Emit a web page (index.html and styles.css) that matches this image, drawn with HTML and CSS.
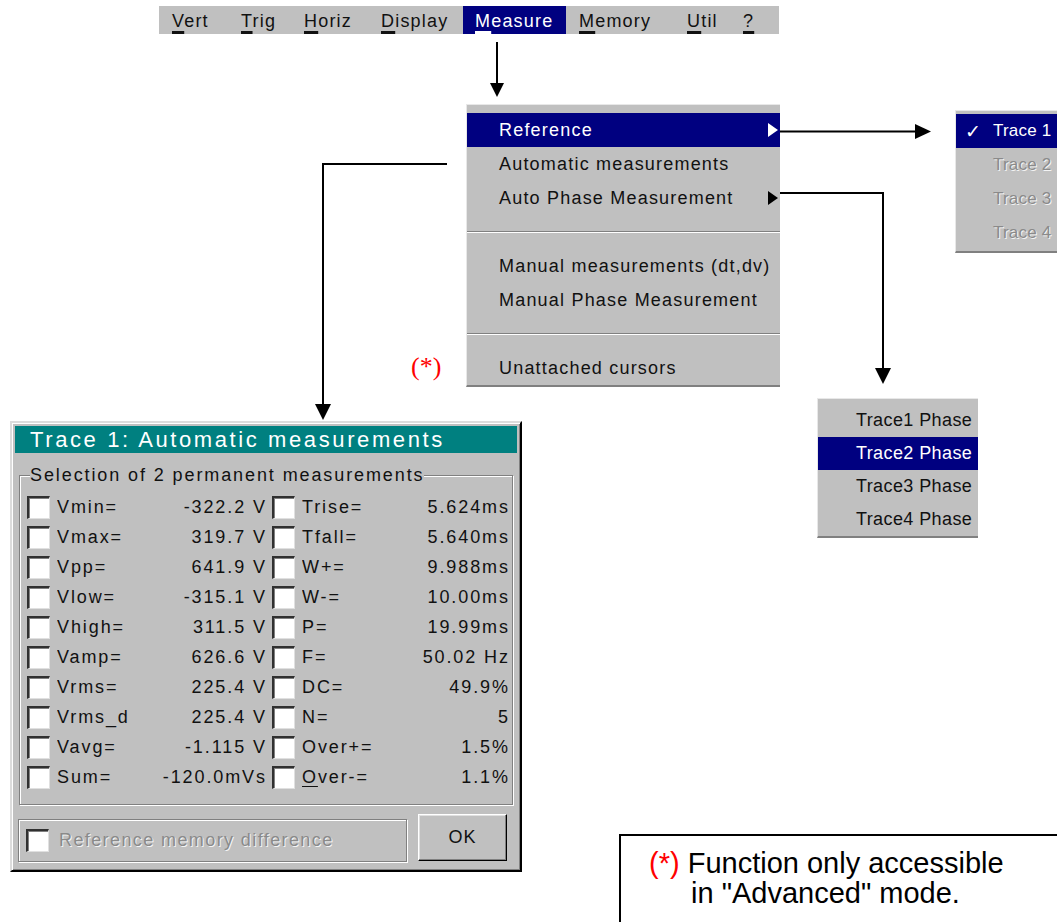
FILE: index.html
```html
<!DOCTYPE html>
<html>
<head>
    <title>Measure menu</title>
    <link rel="stylesheet" href="styles.css">
</head>
<body>
<div class="canvas">

    <div class="menubar">
        <span class="menubar-item"><u>V</u>ert</span>
        <span class="menubar-item"><u>T</u>rig</span>
        <span class="menubar-item"><u>H</u>oriz</span>
        <span class="menubar-item"><u>D</u>isplay</span>
        <span class="menubar-item active"><u>M</u>easure</span>
        <span class="menubar-item"><u>M</u>emory</span>
        <span class="menubar-item"><u>U</u>til</span>
        <span class="menubar-item"><u>?</u></span>
    </div>

    <div class="popup measure-menu">
        <div class="popup-item selected">Reference<span class="submenu-arrow"></span></div>
        <div class="popup-item">Automatic measurements</div>
        <div class="popup-item">Auto Phase Measurement<span class="submenu-arrow"></span></div>
        <div class="popup-sep"></div>
        <div class="popup-item">Manual measurements (dt,dv)</div>
        <div class="popup-item">Manual Phase Measurement</div>
        <div class="popup-sep"></div>
        <div class="popup-item">Unattached cursors</div>
    </div>

    <div class="popup trace-menu">
        <div class="popup-item selected"><span class="tick">✓</span>Trace 1</div>
        <div class="popup-item disabled"><span class="tick"></span>Trace 2</div>
        <div class="popup-item disabled"><span class="tick"></span>Trace 3</div>
        <div class="popup-item disabled"><span class="tick"></span>Trace 4</div>
    </div>

    <div class="popup phase-menu">
        <div class="popup-item">Trace1 Phase</div>
        <div class="popup-item selected">Trace2 Phase</div>
        <div class="popup-item">Trace3 Phase</div>
        <div class="popup-item">Trace4 Phase</div>
    </div>

    <span class="star-mark">(*)</span>

    <div class="dialog">
        <div class="dialog-title">Trace 1: Automatic measurements</div>
        <div class="group">
            <span class="group-title">Selection of 2 permanent measurements</span>
            <div class="measure-grid">
                <div class="measure"><span class="check"></span><span class="m-label">Vmin=</span><span class="m-value">-322.2 V</span></div>
                <div class="measure"><span class="check"></span><span class="m-label">Trise=</span><span class="m-value">5.624ms</span></div>
                <div class="measure"><span class="check"></span><span class="m-label">Vmax=</span><span class="m-value">319.7 V</span></div>
                <div class="measure"><span class="check"></span><span class="m-label">Tfall=</span><span class="m-value">5.640ms</span></div>
                <div class="measure"><span class="check"></span><span class="m-label">Vpp=</span><span class="m-value">641.9 V</span></div>
                <div class="measure"><span class="check"></span><span class="m-label">W+=</span><span class="m-value">9.988ms</span></div>
                <div class="measure"><span class="check"></span><span class="m-label">Vlow=</span><span class="m-value">-315.1 V</span></div>
                <div class="measure"><span class="check"></span><span class="m-label">W-=</span><span class="m-value">10.00ms</span></div>
                <div class="measure"><span class="check"></span><span class="m-label">Vhigh=</span><span class="m-value">311.5 V</span></div>
                <div class="measure"><span class="check"></span><span class="m-label">P=</span><span class="m-value">19.99ms</span></div>
                <div class="measure"><span class="check"></span><span class="m-label">Vamp=</span><span class="m-value">626.6 V</span></div>
                <div class="measure"><span class="check"></span><span class="m-label">F=</span><span class="m-value">50.02 Hz</span></div>
                <div class="measure"><span class="check"></span><span class="m-label">Vrms=</span><span class="m-value">225.4 V</span></div>
                <div class="measure"><span class="check"></span><span class="m-label">DC=</span><span class="m-value">49.9%</span></div>
                <div class="measure"><span class="check"></span><span class="m-label">Vrms_dc=</span><span class="m-value">225.4 V</span></div>
                <div class="measure"><span class="check"></span><span class="m-label">N=</span><span class="m-value">5</span></div>
                <div class="measure"><span class="check"></span><span class="m-label">Vavg=</span><span class="m-value">-1.115 V</span></div>
                <div class="measure"><span class="check"></span><span class="m-label">Over+=</span><span class="m-value">1.5%</span></div>
                <div class="measure"><span class="check"></span><span class="m-label">Sum=</span><span class="m-value">-120.0mVs</span></div>
                <div class="measure"><span class="check"></span><span class="m-label"><u>O</u>ver-=</span><span class="m-value">1.1%</span></div>
            </div>
        </div>
        <div class="dialog-bottom">
            <div class="ref-diff"><span class="check"></span><span class="disabled-text">Reference memory difference</span></div>
            <div class="ok-button">OK</div>
        </div>
    </div>

    <div class="note">
        <div><span class="note-star">(*)</span> Function only accessible</div>
        <div class="note-line2">in "Advanced" mode.</div>
    </div>

    <svg class="arrows" width="1057" height="922" viewBox="0 0 1057 922">
        <g fill="none" stroke="#000" stroke-width="2">
            <path d="M497 42 V86"/>
            <path d="M780 131.5 H917"/>
            <path d="M780 193 H883 V370"/>
            <path d="M447 164 H323 V406"/>
        </g>
        <g fill="#000">
            <polygon points="490,83 504,83 497,97"/>
            <polygon points="915,124 915,139 931,131.5"/>
            <polygon points="875,368 891,368 883,384"/>
            <polygon points="315,404 331,404 323,420"/>
        </g>
    </svg>

</div>
</body>
</html>
```

FILE: styles.css
```css
body {
    margin: 0;
    background: #fff;
    font-family: "Liberation Sans", Arial, sans-serif;
    color: #000;
    overflow: hidden;
}
.canvas {
    position: relative;
    width: 1057px;
    height: 922px;
    overflow: hidden;
}

/* menu bar */
.menubar {
    position: absolute;
    left: 159px;
    top: 6px;
    width: 620px;
    height: 28px;
    padding-left: 1px;
    box-sizing: border-box;
    background: #c0c0c0;
    display: grid;
    grid-template-columns: 69px 63px 77px 94px 104px 108px 56px auto;
    font-size: 18px;
    letter-spacing: 1.2px;
    color: #111;
}
.menubar-item {
    padding: 2px 0 0 12px;
    height: 28px;
    box-sizing: border-box;
    line-height: 26px;
    white-space: nowrap;
}
.menubar-item u {
    text-decoration-thickness: 3px;
    text-underline-offset: 4px;
}
.menubar-item.active {
    background: #000080;
    color: #fff;
    margin-right: 1px;
}

/* popup menus */
.popup {
    position: absolute;
    background: #c0c0c0;
    font-size: 18px;
    letter-spacing: 1.2px;
    color: #111;
    border-top: 1px solid #e8e8e8;
    border-left: 1px solid #e8e8e8;
    border-bottom: 2px solid #808080;
    box-sizing: border-box;
    white-space: nowrap;
    overflow: hidden;
}
.popup-item {
    display: flex;
    align-items: center;
    height: 34px;
}
.popup-item.selected {
    background: #000080;
    color: #fff;
}
.popup-item.disabled {
    color: #8a8a8a;
    text-shadow: 1px 1px 0 #f4f4f4;
}
.popup-sep {
    height: 34px;
    display: flex;
    flex-direction: column;
    justify-content: center;
}
.popup-sep::before {
    content: "";
    display: block;
    border-top: 1px solid #808080;
    border-bottom: 1px solid #fff;
}
.submenu-arrow {
    margin-left: auto;
    margin-right: 2px;
    width: 0;
    height: 0;
    border-left: 10px solid #000;
    border-top: 7px solid transparent;
    border-bottom: 7px solid transparent;
}
.selected .submenu-arrow {
    border-left-color: #fff;
}

.measure-menu {
    left: 466px;
    top: 104px;
    width: 314px;
    padding-top: 8px;
}
.measure-menu .popup-item {
    padding-left: 32px;
}

.trace-menu {
    left: 955px;
    top: 110px;
    width: 130px;
    padding-top: 3px;
    padding-bottom: 1px;
    font-size: 17px;
    letter-spacing: 0.2px;
}
.tick {
    font-family: "DejaVu Sans", sans-serif;
    width: 37px;
    padding-left: 9px;
    box-sizing: border-box;
    font-size: 19px;
}

.phase-menu {
    left: 817px;
    top: 398px;
    width: 161px;
    padding-top: 5px;
    padding-bottom: 0;
    letter-spacing: 0.4px;
}
.phase-menu .popup-item {
    height: 33px;
    padding-left: 38px;
}

.star-mark {
    position: absolute;
    left: 411px;
    top: 352px;
    font-family: "Liberation Serif", "Times New Roman", serif;
    font-size: 26px;
    line-height: 30px;
    color: #f00;
}

/* measurement dialog */
.dialog {
    position: absolute;
    left: 10px;
    top: 421px;
    width: 512px;
    box-sizing: border-box;
    background: #c0c0c0;
    border: 2px solid;
    border-color: #dcdcdc #000 #000 #dcdcdc;
    box-shadow: inset 1px 1px 0 #fff, inset -1px -1px 0 #808080;
    padding: 3px 3px 8px;
    font-size: 18px;
    letter-spacing: 1.9px;
    color: #111;
}
.dialog-title {
    height: 27px;
    line-height: 27px;
    background: #008080;
    color: #fff;
    font-size: 22px;
    letter-spacing: 2.6px;
    padding-left: 15px;
    white-space: nowrap;
}
.group {
    position: relative;
    margin: 22px 4px 0;
    padding: 16px 4px 12px 7px;
    border: 1px solid #808080;
    box-shadow: inset 1px 1px 0 #fff, 1px 1px 0 #fff;
}
.group-title {
    position: absolute;
    left: 10px;
    top: -11px;
    line-height: 20px;
    background: #c0c0c0;
    white-space: nowrap;
}
.measure-grid {
    display: grid;
    grid-template-columns: 238px 1fr;
    column-gap: 7px;
}
.measure {
    display: flex;
    align-items: center;
    height: 30px;
    white-space: nowrap;
}
.check {
    flex: none;
    width: 23px;
    height: 23px;
    box-sizing: border-box;
    background: #fff;
    border-top: 2px solid #303030;
    border-left: 2px solid #303030;
    border-right: 1px solid #e0e0e0;
    border-bottom: 1px solid #e0e0e0;
    box-shadow: inset 1px 1px 0 #808080;
}
.m-label {
    width: 71px;
    margin-left: 7px;
    overflow: hidden;
}
.m-value {
    margin-left: auto;
    margin-right: -1.9px;
}
.m-label u {
    text-underline-offset: 3px;
}

.dialog-bottom {
    display: flex;
    align-items: flex-start;
    margin-top: 9px;
}
.ref-diff {
    display: flex;
    align-items: center;
    width: 389px;
    height: 43px;
    margin: 5px 0 0 3px;
    padding-left: 7px;
    box-sizing: border-box;
    border: 1px solid #808080;
    box-shadow: inset 1px 1px 0 #fff, 1px 1px 0 #fff;
}
.disabled-text {
    margin-left: 10px;
    color: #8a8a8a;
    text-shadow: 1px 1px 0 #f4f4f4;
    letter-spacing: 1.4px;
}
.ok-button {
    width: 89px;
    height: 47px;
    margin-left: 11px;
    box-sizing: border-box;
    border: 1px solid;
    border-color: #fff #000 #000 #fff;
    box-shadow: inset -1px -1px 0 #808080, inset 1px 1px 0 #e0e0e0;
    display: flex;
    align-items: center;
    justify-content: center;
    letter-spacing: 1px;
}

/* footnote box */
.note {
    position: absolute;
    left: 619px;
    top: 834px;
    width: 460px;
    height: 110px;
    border: 2px solid #000;
    padding: 12px 0 0 28px;
    font-size: 29px;
    line-height: 30px;
    color: #000;
    white-space: nowrap;
}
.note-star {
    color: #f00;
}
.note-line2 {
    padding-left: 42px;
}

.arrows {
    position: absolute;
    left: 0;
    top: 0;
    pointer-events: none;
}
```
